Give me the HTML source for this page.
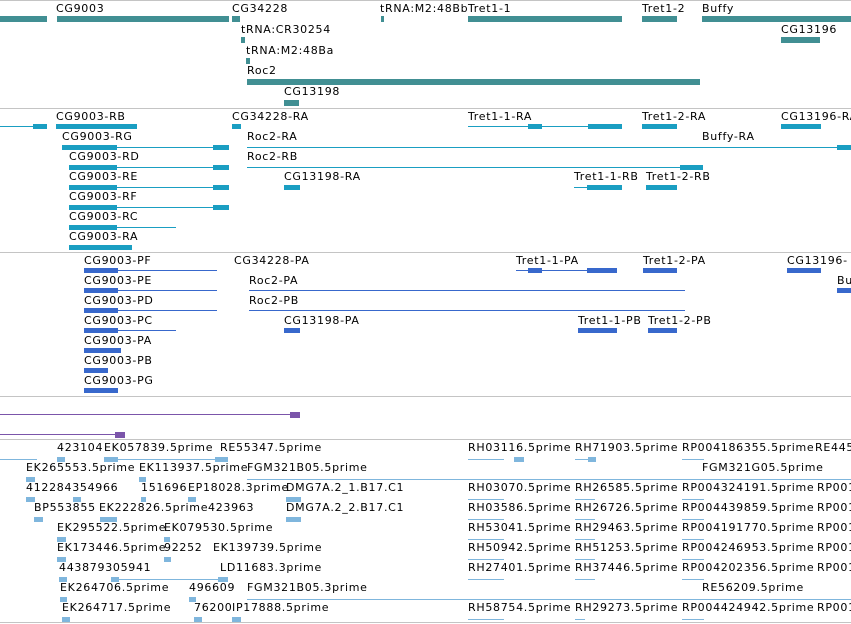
<!DOCTYPE html>
<html><head><meta charset="utf-8"><style>
body{margin:0;width:851px;height:624px;background:#fff;position:relative;overflow:hidden}
div{position:absolute}
.t{font:11px "DejaVu Sans","Liberation Sans",sans-serif;letter-spacing:.7px;white-space:nowrap;color:#000;line-height:13px}
.h{left:0;width:851px;height:1px;background:#c4c4c4}
.g{background:#418f93;height:6px}
.r{background:#1a9ec2}
.p{background:#3868cc}
.e{background:#7fb6dd}
.u{background:#7b55aa}
.l{height:1px}
.b{height:5px}
</style></head><body>
<div class="h" style="top:0"></div>
<div class="t" style="left:56px;top:2px">CG9003</div>
<div class="t" style="left:232px;top:2px">CG34228</div>
<div class="t" style="left:380px;top:2px">tRNA:M2:48Bb</div>
<div class="t" style="left:468px;top:2px">Tret1-1</div>
<div class="t" style="left:642px;top:2px">Tret1-2</div>
<div class="t" style="left:702px;top:2px">Buffy</div>
<div class="g" style="left:0;width:47px;top:16px"></div>
<div class="g" style="left:57px;width:172px;top:16px"></div>
<div class="g" style="left:232px;width:8px;top:16px"></div>
<div class="g" style="left:381px;width:3px;top:16px"></div>
<div class="g" style="left:468px;width:154px;top:16px"></div>
<div class="g" style="left:642px;width:35px;top:16px"></div>
<div class="g" style="left:702px;width:149px;top:16px"></div>
<div class="t" style="left:241px;top:23px">tRNA:CR30254</div>
<div class="g" style="left:241px;width:4px;top:37px"></div>
<div class="t" style="left:781px;top:23px">CG13196</div>
<div class="g" style="left:781px;width:39px;top:37px"></div>
<div class="t" style="left:246px;top:44px">tRNA:M2:48Ba</div>
<div class="g" style="left:246px;width:4px;top:58px"></div>
<div class="t" style="left:247px;top:64px">Roc2</div>
<div class="g" style="left:247px;width:453px;top:79px"></div>
<div class="t" style="left:284px;top:85px">CG13198</div>
<div class="g" style="left:284px;width:15px;top:100px"></div>
<div class="h" style="top:108px"></div>
<div class="t" style="left:56px;top:110px">CG9003-RB</div>
<div class="t" style="left:232px;top:110px">CG34228-RA</div>
<div class="t" style="left:468px;top:110px">Tret1-1-RA</div>
<div class="t" style="left:642px;top:110px">Tret1-2-RA</div>
<div class="t" style="left:781px;top:110px">CG13196-RA</div>
<div class="r l" style="left:0;width:40px;top:126px"></div>
<div class="r b" style="left:33px;width:14px;top:124px"></div>
<div class="r b" style="left:56px;width:81px;top:124px"></div>
<div class="r b" style="left:232px;width:9px;top:124px"></div>
<div class="r l" style="left:468px;width:154px;top:126px"></div>
<div class="r b" style="left:528px;width:14px;top:124px"></div>
<div class="r b" style="left:588px;width:34px;top:124px"></div>
<div class="r b" style="left:642px;width:35px;top:124px"></div>
<div class="r b" style="left:781px;width:40px;top:124px"></div>
<div class="t" style="left:62px;top:130px">CG9003-RG</div>
<div class="t" style="left:247px;top:130px">Roc2-RA</div>
<div class="t" style="left:702px;top:130px">Buffy-RA</div>
<div class="r l" style="left:62px;width:167px;top:147px"></div>
<div class="r b" style="left:62px;width:55px;top:145px"></div>
<div class="r b" style="left:213px;width:16px;top:145px"></div>
<div class="r l" style="left:247px;width:604px;top:147px"></div>
<div class="r b" style="left:837px;width:14px;top:145px"></div>
<div class="t" style="left:69px;top:150px">CG9003-RD</div>
<div class="t" style="left:247px;top:150px">Roc2-RB</div>
<div class="r l" style="left:69px;width:160px;top:167px"></div>
<div class="r b" style="left:69px;width:48px;top:165px"></div>
<div class="r b" style="left:213px;width:16px;top:165px"></div>
<div class="r l" style="left:247px;width:456px;top:167px"></div>
<div class="r b" style="left:680px;width:23px;top:165px"></div>
<div class="t" style="left:69px;top:170px">CG9003-RE</div>
<div class="t" style="left:284px;top:170px">CG13198-RA</div>
<div class="t" style="left:574px;top:170px">Tret1-1-RB</div>
<div class="t" style="left:646px;top:170px">Tret1-2-RB</div>
<div class="r l" style="left:69px;width:160px;top:187px"></div>
<div class="r b" style="left:69px;width:48px;top:185px"></div>
<div class="r b" style="left:213px;width:16px;top:185px"></div>
<div class="r b" style="left:284px;width:16px;top:185px"></div>
<div class="r l" style="left:574px;width:48px;top:187px"></div>
<div class="r b" style="left:587px;width:35px;top:185px"></div>
<div class="r b" style="left:646px;width:31px;top:185px"></div>
<div class="t" style="left:69px;top:190px">CG9003-RF</div>
<div class="r l" style="left:69px;width:160px;top:207px"></div>
<div class="r b" style="left:69px;width:48px;top:205px"></div>
<div class="r b" style="left:213px;width:16px;top:205px"></div>
<div class="t" style="left:69px;top:210px">CG9003-RC</div>
<div class="r l" style="left:69px;width:107px;top:227px"></div>
<div class="r b" style="left:69px;width:48px;top:225px"></div>
<div class="t" style="left:69px;top:230px">CG9003-RA</div>
<div class="r b" style="left:69px;width:63px;top:245px"></div>
<div class="h" style="top:252px"></div>
<div class="t" style="left:84px;top:254px">CG9003-PF</div>
<div class="t" style="left:234px;top:254px">CG34228-PA</div>
<div class="t" style="left:516px;top:254px">Tret1-1-PA</div>
<div class="t" style="left:643px;top:254px">Tret1-2-PA</div>
<div class="t" style="left:787px;top:254px">CG13196-</div>
<div class="p l" style="left:84px;width:133px;top:270px"></div>
<div class="p b" style="left:84px;width:34px;top:268px"></div>
<div class="p l" style="left:516px;width:101px;top:270px"></div>
<div class="p b" style="left:528px;width:14px;top:268px"></div>
<div class="p b" style="left:587px;width:30px;top:268px"></div>
<div class="p b" style="left:643px;width:34px;top:268px"></div>
<div class="p b" style="left:787px;width:34px;top:268px"></div>
<div class="t" style="left:84px;top:274px">CG9003-PE</div>
<div class="t" style="left:249px;top:274px">Roc2-PA</div>
<div class="t" style="left:837px;top:274px">Bu</div>
<div class="p l" style="left:84px;width:133px;top:290px"></div>
<div class="p b" style="left:84px;width:34px;top:288px"></div>
<div class="p l" style="left:249px;width:436px;top:290px"></div>
<div class="p b" style="left:837px;width:14px;top:288px"></div>
<div class="t" style="left:84px;top:294px">CG9003-PD</div>
<div class="t" style="left:249px;top:294px">Roc2-PB</div>
<div class="p l" style="left:84px;width:133px;top:310px"></div>
<div class="p b" style="left:84px;width:34px;top:308px"></div>
<div class="p l" style="left:249px;width:436px;top:310px"></div>
<div class="t" style="left:84px;top:314px">CG9003-PC</div>
<div class="t" style="left:284px;top:314px">CG13198-PA</div>
<div class="t" style="left:578px;top:314px">Tret1-1-PB</div>
<div class="t" style="left:648px;top:314px">Tret1-2-PB</div>
<div class="p l" style="left:84px;width:92px;top:330px"></div>
<div class="p b" style="left:84px;width:34px;top:328px"></div>
<div class="p b" style="left:284px;width:16px;top:328px"></div>
<div class="p b" style="left:578px;width:39px;top:328px"></div>
<div class="p b" style="left:648px;width:29px;top:328px"></div>
<div class="t" style="left:84px;top:334px">CG9003-PA</div>
<div class="p b" style="left:84px;width:37px;top:348px"></div>
<div class="t" style="left:84px;top:354px">CG9003-PB</div>
<div class="p b" style="left:84px;width:24px;top:368px"></div>
<div class="t" style="left:84px;top:374px">CG9003-PG</div>
<div class="p b" style="left:84px;width:34px;top:388px"></div>
<div class="h" style="top:396px"></div>
<div class="u l" style="left:0;width:292px;top:414px"></div>
<div class="u b" style="left:290px;width:10px;top:412px;height:6px"></div>
<div class="u l" style="left:0;width:118px;top:434px"></div>
<div class="u b" style="left:115px;width:10px;top:432px;height:6px"></div>
<div class="h" style="top:439px"></div>
<div class="t" style="left:57px;top:441px">423104</div>
<div class="t" style="left:104px;top:441px">EK057839.5prime</div>
<div class="t" style="left:220px;top:441px">RE55347.5prime</div>
<div class="t" style="left:468px;top:441px">RH03116.5prime</div>
<div class="t" style="left:575px;top:441px">RH71903.5prime</div>
<div class="t" style="left:682px;top:441px">RP004186355.5prime</div>
<div class="t" style="left:815px;top:441px">RE445</div>
<div class="e l" style="left:0;width:37px;top:459px"></div>
<div class="e b" style="left:57px;width:8px;top:457px"></div>
<div class="e l" style="left:104px;width:124px;top:459px"></div>
<div class="e b" style="left:104px;width:14px;top:457px"></div>
<div class="e b" style="left:215px;width:13px;top:457px"></div>
<div class="e l" style="left:468px;width:36px;top:459px"></div>
<div class="e b" style="left:514px;width:10px;top:457px"></div>
<div class="e l" style="left:575px;width:20px;top:459px"></div>
<div class="e b" style="left:588px;width:8px;top:457px"></div>
<div class="e l" style="left:682px;width:22px;top:459px"></div>
<div class="t" style="left:26px;top:461px">EK265553.5prime</div>
<div class="t" style="left:139px;top:461px">EK113937.5prime</div>
<div class="t" style="left:247px;top:461px">FGM321B05.5prime</div>
<div class="t" style="left:702px;top:461px">FGM321G05.5prime</div>
<div class="e b" style="left:26px;width:9px;top:477px"></div>
<div class="e b" style="left:139px;width:7px;top:477px"></div>
<div class="e l" style="left:247px;width:604px;top:479px"></div>
<div class="t" style="left:26px;top:481px">412284354966</div>
<div class="t" style="left:141px;top:481px">151696</div>
<div class="t" style="left:188px;top:481px">EP18028.3prime</div>
<div class="t" style="left:286px;top:481px">DMG7A.2_1.B17.C1</div>
<div class="t" style="left:468px;top:481px">RH03070.5prime</div>
<div class="t" style="left:575px;top:481px">RH26585.5prime</div>
<div class="t" style="left:682px;top:481px">RP004324191.5prime</div>
<div class="t" style="left:817px;top:481px">RP001</div>
<div class="e b" style="left:26px;width:9px;top:497px"></div>
<div class="e b" style="left:73px;width:8px;top:497px"></div>
<div class="e b" style="left:141px;width:5px;top:497px"></div>
<div class="e b" style="left:188px;width:8px;top:497px"></div>
<div class="e b" style="left:286px;width:15px;top:497px"></div>
<div class="e l" style="left:468px;width:36px;top:499px"></div>
<div class="e l" style="left:575px;width:20px;top:499px"></div>
<div class="e l" style="left:682px;width:22px;top:499px"></div>
<div class="t" style="left:34px;top:501px">BP553855</div>
<div class="t" style="left:99px;top:501px">EK222826.5prime</div>
<div class="t" style="left:208px;top:501px">423963</div>
<div class="t" style="left:286px;top:501px">DMG7A.2_2.B17.C1</div>
<div class="t" style="left:468px;top:501px">RH03586.5prime</div>
<div class="t" style="left:575px;top:501px">RH26726.5prime</div>
<div class="t" style="left:682px;top:501px">RP004439859.5prime</div>
<div class="t" style="left:817px;top:501px">RP001</div>
<div class="e b" style="left:34px;width:9px;top:517px"></div>
<div class="e b" style="left:100px;width:17px;top:517px"></div>
<div class="e b" style="left:286px;width:15px;top:517px"></div>
<div class="e l" style="left:468px;width:36px;top:519px"></div>
<div class="e l" style="left:575px;width:20px;top:519px"></div>
<div class="e l" style="left:682px;width:22px;top:519px"></div>
<div class="t" style="left:57px;top:521px">EK295522.5prime</div>
<div class="t" style="left:164px;top:521px">EK079530.5prime</div>
<div class="t" style="left:468px;top:521px">RH53041.5prime</div>
<div class="t" style="left:575px;top:521px">RH29463.5prime</div>
<div class="t" style="left:682px;top:521px">RP004191770.5prime</div>
<div class="t" style="left:817px;top:521px">RP001</div>
<div class="e b" style="left:57px;width:9px;top:537px"></div>
<div class="e b" style="left:164px;width:6px;top:537px"></div>
<div class="e l" style="left:468px;width:36px;top:539px"></div>
<div class="e l" style="left:575px;width:20px;top:539px"></div>
<div class="e l" style="left:682px;width:22px;top:539px"></div>
<div class="t" style="left:57px;top:541px">EK173446.5prime</div>
<div class="t" style="left:164px;top:541px">92252</div>
<div class="t" style="left:213px;top:541px">EK139739.5prime</div>
<div class="t" style="left:468px;top:541px">RH50942.5prime</div>
<div class="t" style="left:575px;top:541px">RH51253.5prime</div>
<div class="t" style="left:682px;top:541px">RP004246953.5prime</div>
<div class="t" style="left:817px;top:541px">RP001</div>
<div class="e b" style="left:57px;width:9px;top:557px"></div>
<div class="e b" style="left:164px;width:7px;top:557px"></div>
<div class="e l" style="left:468px;width:36px;top:559px"></div>
<div class="e l" style="left:575px;width:20px;top:559px"></div>
<div class="e l" style="left:682px;width:22px;top:559px"></div>
<div class="t" style="left:59px;top:561px">443879305941</div>
<div class="t" style="left:220px;top:561px">LD11683.3prime</div>
<div class="t" style="left:468px;top:561px">RH27401.5prime</div>
<div class="t" style="left:575px;top:561px">RH37446.5prime</div>
<div class="t" style="left:682px;top:561px">RP004202356.5prime</div>
<div class="t" style="left:817px;top:561px">RP001</div>
<div class="e b" style="left:59px;width:8px;top:577px"></div>
<div class="e l" style="left:111px;width:117px;top:579px"></div>
<div class="e b" style="left:111px;width:8px;top:577px"></div>
<div class="e b" style="left:218px;width:10px;top:577px"></div>
<div class="e l" style="left:468px;width:36px;top:579px"></div>
<div class="e l" style="left:575px;width:20px;top:579px"></div>
<div class="e l" style="left:682px;width:22px;top:579px"></div>
<div class="t" style="left:60px;top:581px">EK264706.5prime</div>
<div class="t" style="left:189px;top:581px">496609</div>
<div class="t" style="left:247px;top:581px">FGM321B05.3prime</div>
<div class="t" style="left:702px;top:581px">RE56209.5prime</div>
<div class="e b" style="left:60px;width:7px;top:597px"></div>
<div class="e b" style="left:189px;width:7px;top:597px"></div>
<div class="e l" style="left:247px;width:604px;top:599px"></div>
<div class="t" style="left:62px;top:601px">EK264717.5prime</div>
<div class="t" style="left:194px;top:601px">76200</div>
<div class="t" style="left:232px;top:601px">IP17888.5prime</div>
<div class="t" style="left:468px;top:601px">RH58754.5prime</div>
<div class="t" style="left:575px;top:601px">RH29273.5prime</div>
<div class="t" style="left:682px;top:601px">RP004424942.5prime</div>
<div class="t" style="left:817px;top:601px">RP001</div>
<div class="e b" style="left:62px;width:8px;top:617px"></div>
<div class="e b" style="left:194px;width:8px;top:617px"></div>
<div class="e b" style="left:232px;width:9px;top:617px"></div>
<div class="e l" style="left:468px;width:36px;top:619px"></div>
<div class="e l" style="left:575px;width:10px;top:619px"></div>
<div class="e l" style="left:682px;width:22px;top:619px"></div>
<div class="h" style="top:622px"></div>
</body></html>
